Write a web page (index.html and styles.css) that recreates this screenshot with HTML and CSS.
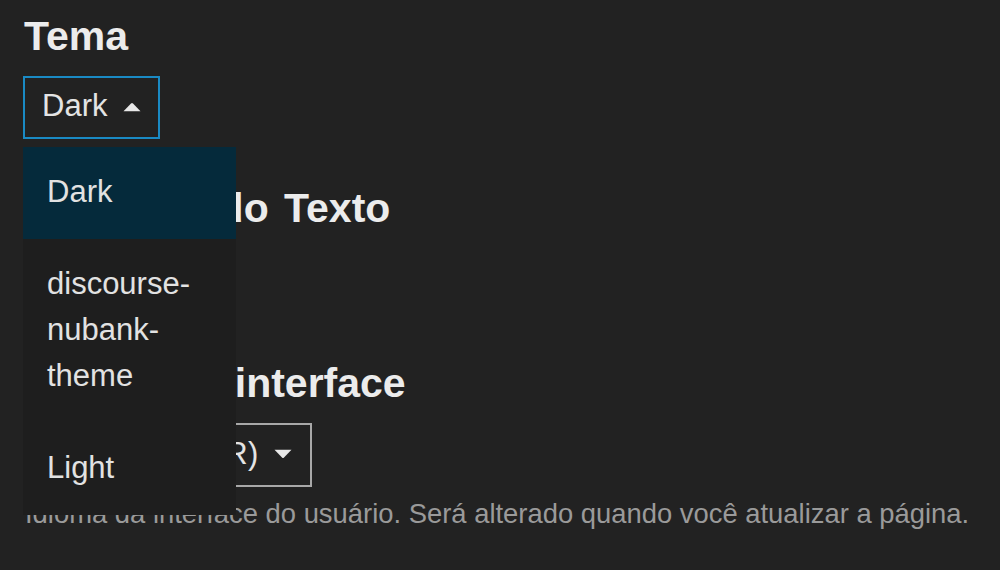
FILE: index.html
```html
<!DOCTYPE html>
<html lang="pt-BR">
<head>
<meta charset="utf-8">
<title>Preferências - Interface</title>
<link rel="stylesheet" href="styles.css">
</head>
<body>
<main class="prefs">
  <section class="control-group theme-group">
    <h3 class="control-label">Tema</h3>
    <div class="select-kit is-expanded">
      <div class="select-header focused">
        <span class="select-name">Dark</span>
        <svg class="caret" width="20" height="10" viewBox="0 0 20 10" aria-hidden="true"><path d="M1.5 9.2 L9 1.4 Q10 0.4 11 1.4 L18.5 9.2 Z" fill="#e8e8e8"/></svg>
      </div>
      <ul class="select-body">
        <li class="option is-highlighted">Dark</li>
        <li class="option">discourse-nubank-theme</li>
        <li class="option">Light</li>
      </ul>
    </div>
  </section>

  <section class="control-group text-size-group">
    <h3 class="control-label">Tamanho do Texto</h3>
    <div class="select-kit">
      <div class="select-header">
        <span class="select-name">Normal</span>
        <svg class="caret" width="20" height="10" viewBox="0 0 20 10" aria-hidden="true"><path d="M1.5 0.8 L9 8.6 Q10 9.6 11 8.6 L18.5 0.8 Z" fill="#e8e8e8"/></svg>
      </div>
    </div>
  </section>

  <section class="control-group locale-group">
    <h3 class="control-label">Idioma da interface</h3>
    <div class="select-kit">
      <div class="select-header gray">
        <span class="select-name">Português (BR)</span>
        <svg class="caret" width="20" height="10" viewBox="0 0 20 10" aria-hidden="true"><path d="M1.5 0.8 L9 8.6 Q10 9.6 11 8.6 L18.5 0.8 Z" fill="#e8e8e8"/></svg>
      </div>
    </div>
    <p class="instructions">Idioma da interface do usuário. Será alterado quando você atualizar a página.</p>
  </section>
</main>
</body>
</html>
```

FILE: styles.css
```css
html, body {
  margin: 0;
  padding: 0;
  background: #222222;
  color: #dddddd;
  font-family: "Liberation Sans", Arial, sans-serif;
}

.prefs {
  padding: 12px 23px 0 23px;
}

.control-group {
  display: flex;
  flex-direction: column;
  align-items: flex-start;
}

.control-label {
  margin: 0 0 0 1px;
  font-size: 41px;
  line-height: 48px;
  font-weight: bold;
  color: #ececec;
  word-spacing: 4px;
}

.select-kit {
  position: relative;
  margin-top: 16px;
}

.select-header {
  display: flex;
  align-items: center;
  box-sizing: border-box;
  height: 63px;
  padding: 10px 16px 14px 17px;
  border: 2px solid #8a8a8a;
  font-size: 31px;
  line-height: 35px;
  color: #e4e4e4;
  background: #222222;
}

.select-header.focused {
  border-color: #1a8ac4;
}

.select-header.gray {
  border-color: #a8a8a8;
  height: 64px;
  padding-right: 17px;
}

.select-header.gray .select-name {
  letter-spacing: 0.2px;
}

.caret {
  margin-left: 15px;
  margin-top: 2px;
  flex: none;
}

.select-body {
  position: absolute;
  top: calc(100% + 8px);
  left: 0;
  width: 213px;
  margin: 0;
  padding: 0;
  list-style: none;
  background: #1e1e1e;
  z-index: 10;
}

.option {
  padding: 22px 24px 24px 24px;
  font-size: 31px;
  line-height: 46px;
  color: #e2e2e2;
}

.option.is-highlighted {
  background: #052a3b;
}

.theme-group {
  margin-bottom: 45px;
}

.text-size-group {
  margin-bottom: 48px;
}

.locale-group .select-kit {
  margin-top: 16px;
}

.instructions {
  margin: 9px 0 0 2px;
  font-size: 27.4px;
  line-height: 36px;
  color: #9a9a9a;
}
```
